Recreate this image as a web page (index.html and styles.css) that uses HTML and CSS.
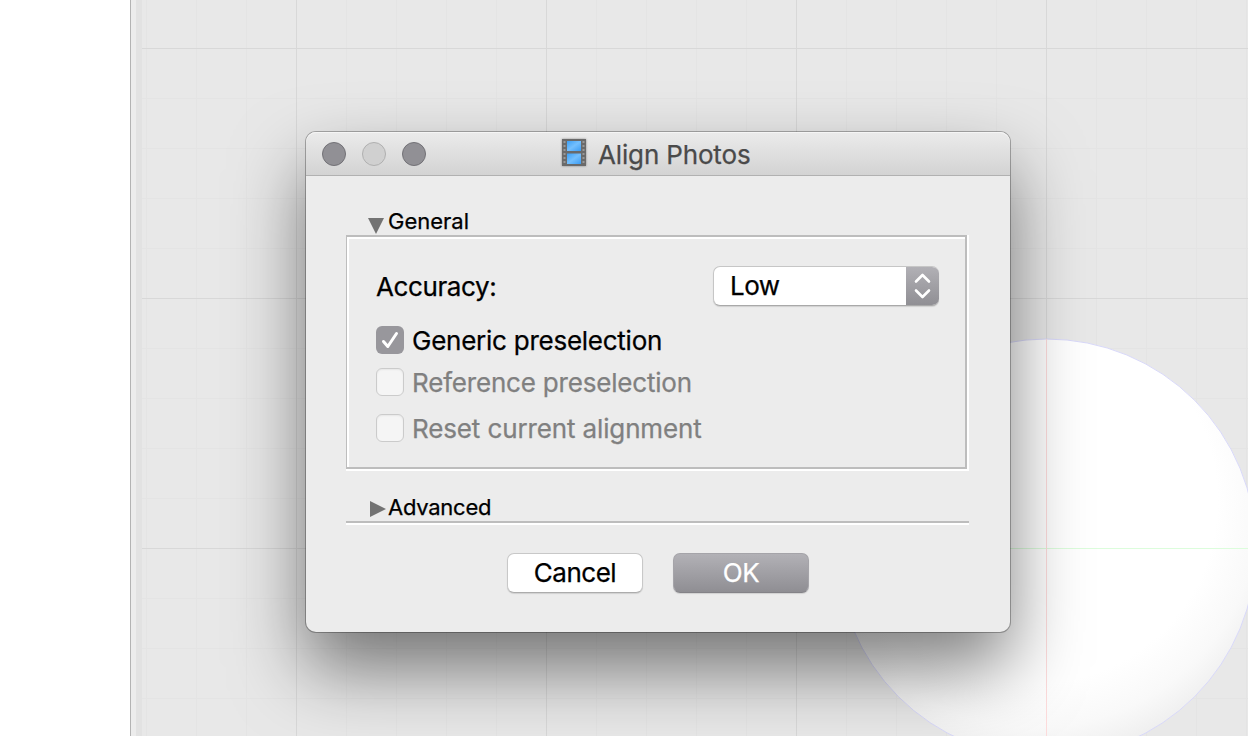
FILE: index.html
```html
<!DOCTYPE html>
<html lang="en">
<head>
<meta charset="utf-8">
<title>Align Photos</title>
<link rel="stylesheet" href="styles.css">
</head>
<body>
<div class="workspace">
  <aside class="sidebar"></aside>
  <div class="splitter"></div>
  <div class="gutter"></div>
  <main class="viewport">
    <svg class="scene" width="1106" height="736" viewBox="142 0 1106 736">
      <defs>
        <radialGradient id="ball" gradientUnits="userSpaceOnUse" cx="1034" cy="500" r="262">
          <stop offset="0.7" stop-color="#fff"/>
          <stop offset="0.87" stop-color="#f9f9f9"/>
          <stop offset="1" stop-color="#eeeeee"/>
        </radialGradient>
        <pattern id="minor" patternUnits="userSpaceOnUse" x="146" y="48" width="50" height="50">
          <path d="M0 .5H50M.5 0V50" stroke="#e4e4e4"/>
        </pattern>
      </defs>
      <rect x="142" width="1106" height="736" fill="url(#minor)"/>
      <path d="M142 48.5H1248M142 298.5H1248M142 548.5H1248M296.5 0V736M546.5 0V736M796.5 0V736M1046.5 0V736" stroke="#d8d8d8"/>
      <circle cx="1046.5" cy="548.5" r="209.5" fill="url(#ball)" stroke="#d9d9fa"/>
      <path d="M837 548.5H1248" stroke="#dcfddc"/>
      <path d="M1046.5 339V736" stroke="#fddcdc"/>
    </svg>
  </main>
</div>

<section class="dialog">
  <header class="titlebar">
    <div class="lights"><i class="light"></i><i class="light light-off"></i><i class="light"></i></div>
    <div class="title">
      <svg class="film" width="28" height="32" viewBox="0 0 28 32">
        <defs><linearGradient id="sky" x1="0" y1="0" x2="1" y2="1"><stop offset="0" stop-color="#3c9ff5"/><stop offset=".5" stop-color="#74bffd"/><stop offset="1" stop-color="#3b9cf3"/></linearGradient></defs>
        <rect x="2" y="1" width="24" height="27" fill="#6a6a6a"/>
        <rect x="7" y="3" width="14" height="10" fill="url(#sky)"/>
        <rect x="7" y="15.500" width="14" height="10.500" fill="url(#sky)"/>
        <path d="M4.500 3V27M23.500 3V27" stroke="#989898" stroke-width="2" stroke-dasharray="2 2"/>
      </svg>
      <span class="title-text">Align Photos</span>
    </div>
  </header>
  <div class="content">
    <div class="heading"><svg class="tri tri-open" width="16" height="16"><path d="M0 0H16L8 16Z" fill="#737373"/></svg><span>General</span></div>
    <div class="group"><div class="frame"><div class="fields">
      <div class="row">
        <label class="accuracy">Accuracy:</label>
        <div class="select"><span class="value">Low</span><span class="stepper"><svg width="33" height="40" fill="none" stroke="#fff" stroke-width="2.600" stroke-linecap="round" stroke-linejoin="round"><path d="M10 15.500L16.500 9L23 15.500M10 24.500L16.500 31L23 24.500"/></svg></span></div>
      </div>
      <div class="check"><span class="box box-on"><svg width="28" height="28" fill="none" stroke="#fff" stroke-width="3" stroke-linecap="round" stroke-linejoin="round"><path d="M7.500 15.500L11.800 20.500L20.500 7.500"/></svg></span><span class="generic">Generic preselection</span></div>
      <div class="check check-off"><span class="box"></span><span class="reference">Reference preselection</span></div>
      <div class="check check-off check-last"><span class="box"></span><span class="reset">Reset current alignment</span></div>
    </div></div></div>
    <div class="heading heading-advanced"><svg class="tri tri-closed" width="16" height="16"><path d="M0 0V16L16 8Z" fill="#737373"/></svg><span>Advanced</span></div>
    <div class="rule"></div>
    <div class="buttons"><button class="button">Cancel</button><button class="button primary">OK</button></div>
  </div>
</section>
</body>
</html>
```
FILE: styles.css
```css
* { box-sizing: border-box; }
body { margin: 0; width: 1248px; height: 736px; overflow: hidden; font-family: Inter, "Liberation Sans", sans-serif; font-size: 26px; color: #000; -webkit-text-stroke: .25px; }
.workspace { display: flex; height: 736px; }
.sidebar { width: 131px; background: #fff; border-right: 1px solid #b3b3b3; }
.splitter { width: 5px; background: #ececec; }
.gutter { width: 6px; background: #e2e2e2; }
.viewport { width: 1106px; background: #e8e8e8; }
.scene { display: block; }
.dialog { position: absolute; left: 306px; top: 132px; width: 704px; height: 500px; border-radius: 10px; background: #ececec; box-shadow: 0 0 0 1px rgba(0,0,0,.28), 0 36px 72px rgba(0,0,0,.5); }
.titlebar { display: flex; align-items: center; height: 44px; padding-left: 16px; border-radius: 10px 10px 0 0; background: linear-gradient(#ebebeb, #d3d3d3); border-bottom: 1px solid #b1b1b1; box-shadow: inset 0 1px #f5f5f5; }
.lights { display: flex; gap: 16px; width: 238px; }
.light { width: 24px; height: 24px; border-radius: 50%; background: #919095; border: 1px solid #727176; }
.light-off { background: #d0d0d0; border-color: #b0b0b0; }
.title { display: flex; align-items: center; gap: 10px; color: #4a4a4a; }
.film { display: block; filter: drop-shadow(0 0 1px rgba(0,0,0,.4)); }
.title-text { letter-spacing: -.15px; padding-top: 2px; }
.content { padding: 30px 41px 0 40px; }
.heading { display: flex; align-items: center; height: 29px; padding-left: 22px; gap: 4px; font-size: 22px; }
.tri { display: block; margin-left: 2px; margin-right: -2px; }
.tri-open { margin: 11px 0 0; }
.tri-closed { margin-top: 5px; }
.group { height: 236px; background: #fff; padding: 0 2px 2px 0; }
.frame { height: 234px; background: #ececec; border: solid #bdbdbd; border-width: 2px 2px 2px 1px; }
.fields { height: 230px; border: solid #fff; border-width: 2px 0 0 2px; padding: 27px 26px 0 27px; }
.row { display: flex; justify-content: space-between; height: 40px; line-height: 42px; }
.select { display: flex; width: 226px; height: 40px; border-radius: 7px; background: #fff; overflow: hidden; border: 1px solid #c6c6c6; border-bottom-color: #a9a9a9; border-right: 0; box-shadow: 0 1px 1px rgba(0,0,0,.12); }
.value { flex: 1; padding-left: 16px; line-height: 37px; }
.stepper { width: 33px; height: 40px; margin-top: -1px; background: linear-gradient(#b2b1b6, #8f8e93); }
.stepper svg { display: block; }
.check { display: flex; align-items: center; gap: 8px; height: 28px; line-height: 28px; margin-top: 20px; }
.check-off { margin-top: 14px; color: #808080; }
.check-last { margin-top: 18px; }
.check span + span { padding-top: 2px; }
.box { width: 28px; height: 28px; border-radius: 6px; background: #f5f5f5; border: 1px solid #cbcbcb; box-shadow: inset 0 1px 2px rgba(0,0,0,.06); }
.box-on { background: #98979c; border: 0; box-shadow: none; }
.box svg { display: block; }
.heading-advanced { margin-top: 21px; letter-spacing: -.25px; }
.rule { height: 4px; background: #fff; border-top: 2px solid #bdbdbd; }
.buttons { display: flex; gap: 30px; padding: 28px 0 0 161px; }
.button { width: 136px; height: 40px; padding: 0 0 2px; border-radius: 7px; border: 1px solid #c8c8c8; border-bottom-color: #acacac; background: #fff; font: inherit; color: #000; letter-spacing: -.5px; box-shadow: 0 1px 1px rgba(0,0,0,.12); }
.primary { color: #fff; border-color: #a5a4a9; border-bottom-color: #848388; background: linear-gradient(#b2b1b6, #8f8e93); }
.accuracy { letter-spacing: -.4px; }
.value { letter-spacing: -.5px; }
.generic { letter-spacing: -.25px; }
.reference { letter-spacing: -.19px; }
.reset { letter-spacing: -.13px; }
```
